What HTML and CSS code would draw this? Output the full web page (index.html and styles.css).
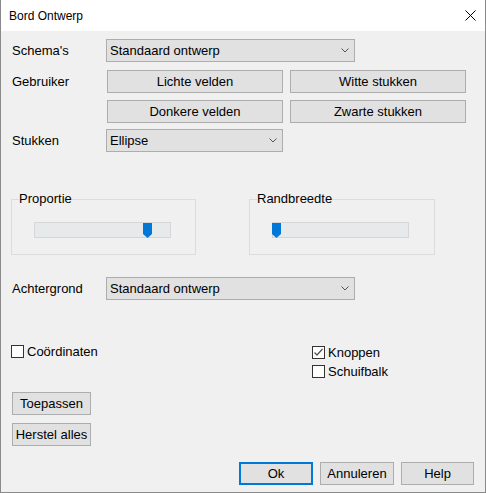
FILE: index.html
```html
<!DOCTYPE html>
<html lang="nl">
<head>
    <meta charset="UTF-8">
    <title>Bord Ontwerp</title>
    <link rel="stylesheet" href="styles.css">
</head>
<body>
    <div class="window">
        <div class="titlebar">
            <span class="title">Bord Ontwerp</span>
            <svg class="close" width="11" height="11" viewBox="0 0 11 11">
                <path d="M0.5 0.5 L10.5 10.5 M10.5 0.5 L0.5 10.5" stroke="#000" stroke-width="1" fill="none"/>
            </svg>
        </div>

        <div class="content">
            <div class="row">
                <span class="lbl">Schema's</span>
                <div class="combo combo-wide">
                    <span>Standaard ontwerp</span>
                    <svg class="arrow" width="8" height="5" viewBox="0 0 8 5"><path d="M0.5 0.5 L4 4 L7.5 0.5" stroke="#555" fill="none"/></svg>
                </div>
            </div>

            <div class="row row-user">
                <span class="lbl lbl-top">Gebruiker</span>
                <div class="btn-grid">
                    <button class="btn">Lichte velden</button>
                    <button class="btn">Witte stukken</button>
                    <button class="btn">Donkere velden</button>
                    <button class="btn">Zwarte stukken</button>
                </div>
            </div>

            <div class="row row-stukken">
                <span class="lbl">Stukken</span>
                <div class="combo combo-short">
                    <span>Ellipse</span>
                    <svg class="arrow" width="8" height="5" viewBox="0 0 8 5"><path d="M0.5 0.5 L4 4 L7.5 0.5" stroke="#555" fill="none"/></svg>
                </div>
            </div>

            <div class="groups">
                <fieldset class="group">
                    <legend>Proportie</legend>
                    <div class="track">
                        <svg class="thumb" style="left: 108px" width="9" height="15" viewBox="0 0 9 15"><polygon points="0,0 9,0 9,11 4.5,15 0,11" fill="#0078d7"/></svg>
                    </div>
                </fieldset>
                <fieldset class="group group-right">
                    <legend>Randbreedte</legend>
                    <div class="track">
                        <svg class="thumb" style="left: -1px" width="9" height="15" viewBox="0 0 9 15"><polygon points="0,0 9,0 9,11 4.5,15 0,11" fill="#0078d7"/></svg>
                    </div>
                </fieldset>
            </div>

            <div class="row row-bg">
                <span class="lbl">Achtergrond</span>
                <div class="combo combo-wide">
                    <span>Standaard ontwerp</span>
                    <svg class="arrow" width="8" height="5" viewBox="0 0 8 5"><path d="M0.5 0.5 L4 4 L7.5 0.5" stroke="#555" fill="none"/></svg>
                </div>
            </div>

            <div class="checks">
                <div class="check-col check-left">
                    <label class="check"><span class="box"></span>Coördinaten</label>
                </div>
                <div class="check-col check-right">
                    <label class="check">
                        <span class="box"><svg width="11" height="11" viewBox="0 0 11 11"><path d="M1.5 5.5 L4 8 L9.5 2" stroke="#555" stroke-width="1.3" fill="none"/></svg></span>Knoppen
                    </label>
                    <label class="check"><span class="box"></span>Schuifbalk</label>
                </div>
            </div>

            <div class="side-buttons">
                <button class="btn btn-side">Toepassen</button>
                <button class="btn btn-side">Herstel alles</button>
            </div>

            <div class="footer">
                <button class="btn btn-foot btn-default">Ok</button>
                <button class="btn btn-foot">Annuleren</button>
                <button class="btn btn-foot btn-help">Help</button>
            </div>
        </div>
    </div>
</body>
</html>
```

FILE: styles.css
```css
body { margin: 0; font-family: "Liberation Sans", Arial, sans-serif; font-size: 13px; color: #000; }
.window { width: 486px; height: 493px; box-sizing: border-box; border: 1px solid #8a8a8a; border-top: 0; background: #f0f0f0; display: flex; flex-direction: column; }

.titlebar { height: 31px; flex-shrink: 0; background: #fff; display: flex; align-items: center; justify-content: space-between; padding: 0 9px 0 8px; }
.title { font-size: 12px; }
.close { display: block; }

.content { flex: 1; display: flex; flex-direction: column; padding: 8px 11px 7px 11px; }
.row { display: flex; align-items: center; }
.lbl { width: 94px; flex-shrink: 0; }
.lbl-top { align-self: flex-start; line-height: 23px; }

.combo { height: 23px; box-sizing: border-box; border: 1px solid #adadad; background: #e1e1e1; display: flex; align-items: center; justify-content: space-between; padding: 0 5px 0 3px; }
.combo-wide { width: 249px; }
.combo-short { width: 177px; }
.arrow { display: block; }

.btn { font-family: inherit; font-size: 13px; color: #000; height: 23px; box-sizing: border-box; border: 1px solid #adadad; background: #e1e1e1; padding: 0; margin: 0; border-radius: 0; }

.row-user { margin-top: 8px; align-items: flex-start; }
.btn-grid { display: grid; grid-template-columns: 176px 176px; column-gap: 7px; row-gap: 7px; margin-left: 1px; }
.row-stukken { margin-top: 6px; }

.groups { display: flex; margin-top: 40px; margin-left: -1px; }
.group { margin: 0; padding: 0 0 16px 0; border: 1px solid #dcdcdc; width: 185px; box-sizing: border-box; min-width: 0; }
.group legend { padding: 0; margin-left: 7px; line-height: 14px; }
.group-right { margin-left: 53px; width: 186px; }
.track { position: relative; margin: 16px 0 0 22px; width: 137px; height: 16px; box-sizing: border-box; border: 1px solid #d6d6d6; background: #e7eaea; }
.thumb { position: absolute; top: 0; display: block; }

.row-bg { margin-top: 22px; }

.checks { display: flex; margin-top: 45px; }
.check-col { display: flex; flex-direction: column; gap: 6px; }
.check-left { width: 301px; margin-left: -1px; }
.check-right { margin-top: 1px; }
.check { display: flex; align-items: center; height: 13px; gap: 3px; }
.box { width: 13px; height: 13px; box-sizing: border-box; border: 1px solid #333; background: #fff; display: flex; align-items: center; justify-content: center; }
.box svg { display: block; }

.side-buttons { display: flex; flex-direction: column; gap: 8px; margin-top: 14px; align-items: flex-start; }
.btn-side { width: 79px; }

.footer { margin-top: auto; display: flex; justify-content: flex-end; gap: 7px; }
.btn-foot { width: 74px; }
.btn-help { width: 73px; }
.btn-default { border: 2px solid #0078d7; }
```
